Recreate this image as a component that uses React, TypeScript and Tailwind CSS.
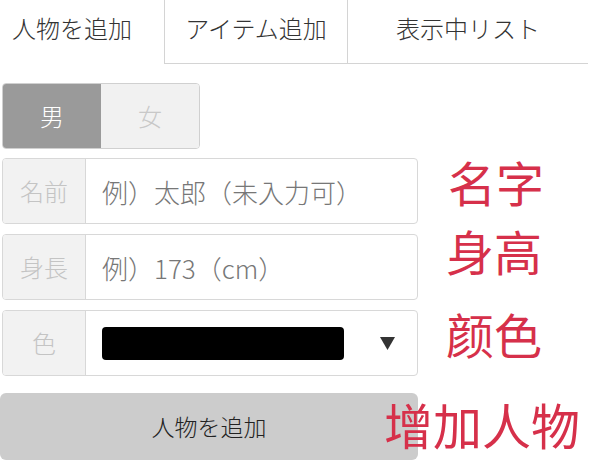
import React from 'react';

const jp = "font-['Noto_Sans_CJK_JP',sans-serif]";
const sc = "font-['Noto_Sans_CJK_SC',sans-serif]";

function Tabs() {
  return (
    <div className="flex h-[64px] w-[588px]">
      <div className="flex w-[164px] items-center pl-3 pb-[8px] text-[24px] text-[#333]">人物を追加</div>
      <div className="flex w-[183px] items-center justify-center border-b border-l border-[#d4d4d4] pb-[8px] text-[24px] text-[#333]">
        アイテム追加
      </div>
      <div className="flex flex-1 items-center justify-center border-b border-l border-[#d4d4d4] pb-[8px] text-[24px] text-[#333]">
        表示中リスト
      </div>
    </div>
  );
}

function Row({ label, children }: { label: string; children: React.ReactNode }) {
  return (
    <div className="flex h-[66px] w-[416px] overflow-hidden rounded-[4px] border border-[#d8d8d8] bg-white">
      <div className="flex w-[83px] items-center justify-center border-r border-[#d8d8d8] bg-[#f2f2f2] text-[24px] text-[#c4c4c4]">
        {label}
      </div>
      <div className="flex flex-1 items-center pl-[16px] pr-[22px]">{children}</div>
    </div>
  );
}

export default function App() {
  return (
    <div className={`relative h-[468px] w-[596px] overflow-hidden bg-white font-light ${jp}`}>
      <Tabs />
      <div className="flex flex-col pl-[2px] pt-[19px]">
        <div className="flex h-[66px] w-[198px] overflow-hidden rounded-[4px] border border-[#d0d0d0] text-[24px]">
          <div className="flex w-[98px] items-center justify-center bg-[#9a9a9a] text-white">男</div>
          <div className="flex flex-1 items-center justify-center bg-[#f1f1f1] text-[#c8c8c8]">女</div>
        </div>
        <div className="mt-[9px] flex flex-col gap-[10px]">
          <Row label="名前">
            <span className="text-[26px] text-[#777]">例）太郎（未入力可）</span>
          </Row>
          <Row label="身長">
            <span className="text-[26px] text-[#777]">例）173（cm）</span>
          </Row>
          <Row label="色">
            <div className="h-[33px] w-[242px] rounded-[4px] bg-black" />
            <svg className="ml-auto" width="15" height="13" viewBox="0 0 15 13">
              <polygon points="0,0 15,0 7.5,13" fill="#333" />
            </svg>
          </Row>
        </div>
        <div className="mt-[17px] flex h-[67px] w-[418px] -ml-[2px] items-center justify-center rounded-[6px] bg-[#cccccc] text-[23px] text-[#222]">
          人物を追加
        </div>
      </div>

      <div className={`absolute left-[448px] top-[157px] text-[48px] font-normal leading-none text-[#d6304a] ${sc}`}>名字</div>
      <div className={`absolute left-[446px] top-[226px] text-[48px] font-normal leading-none text-[#d6304a] ${sc}`}>身高</div>
      <div className={`absolute left-[446px] top-[309px] text-[48px] font-normal leading-none text-[#d6304a] ${sc}`}>颜色</div>
      <div className={`absolute left-[384px] top-[399px] text-[49px] font-normal leading-none text-[#d6304a] ${sc}`}>增加人物</div>
    </div>
  );
}
